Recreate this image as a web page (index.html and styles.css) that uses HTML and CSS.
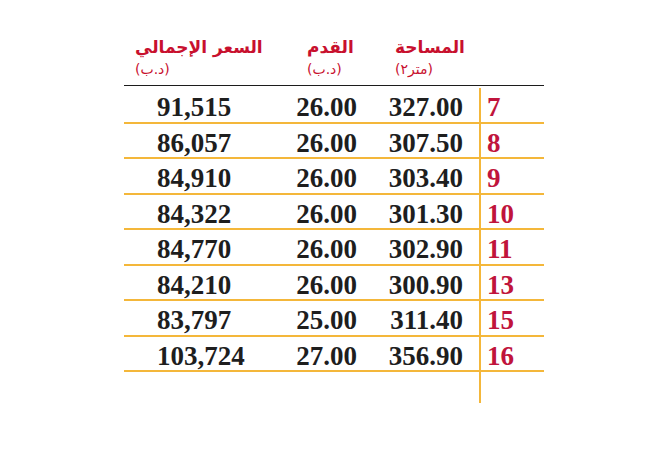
FILE: index.html
```html
<!DOCTYPE html>
<html lang="ar">
<head>
<meta charset="utf-8">
<title>Table</title>
<link rel="stylesheet" href="styles.css">
</head>
<body>
<div class="table">
  <div class="head">
    <div class="hc h1"><span class="ht" dir="rtl">السعر الإجمالي</span><span class="hs" dir="rtl">(د.ب)</span></div>
    <div class="hc h2"><span class="ht" dir="rtl">القدم</span><span class="hs" dir="rtl">(د.ب)</span></div>
    <div class="hc h3"><span class="ht" dir="rtl">المساحة</span><span class="hs" dir="rtl">(متر٢)</span></div>
    <div class="hc h4"></div>
  </div>
  <div class="body">
    <div class="row"><div class="c c1">91,515</div><div class="c c2">26.00</div><div class="c c3">327.00</div><div class="c c4">7</div></div>
    <div class="row"><div class="c c1">86,057</div><div class="c c2">26.00</div><div class="c c3">307.50</div><div class="c c4">8</div></div>
    <div class="row"><div class="c c1">84,910</div><div class="c c2">26.00</div><div class="c c3">303.40</div><div class="c c4">9</div></div>
    <div class="row"><div class="c c1">84,322</div><div class="c c2">26.00</div><div class="c c3">301.30</div><div class="c c4">10</div></div>
    <div class="row"><div class="c c1">84,770</div><div class="c c2">26.00</div><div class="c c3">302.90</div><div class="c c4">11</div></div>
    <div class="row"><div class="c c1">84,210</div><div class="c c2">26.00</div><div class="c c3">300.90</div><div class="c c4">13</div></div>
    <div class="row"><div class="c c1">83,797</div><div class="c c2">25.00</div><div class="c c3">311.40</div><div class="c c4">15</div></div>
    <div class="row"><div class="c c1">103,724</div><div class="c c2">27.00</div><div class="c c3">356.90</div><div class="c c4">16</div></div>
    <div class="tail"><div></div><div></div><div></div><div class="c4"></div></div>
  </div>
</div>
</body>
</html>
```
FILE: styles.css
```css
html, body {
  margin: 0;
  padding: 0;
  background: #ffffff;
}
body {
  width: 668px;
  height: 452px;
  overflow: hidden;
}
.table {
  margin-left: 124px;
  width: 420px;
}
.head, .row, .tail {
  display: grid;
  grid-template-columns: 166px 90px 99px 65px;
}
.head {
  height: 86px;
  box-sizing: border-box;
  border-bottom: 1.5px solid #1c1c1c;
  padding-top: 36px;
}
.hc {
  display: flex;
  flex-direction: column;
  align-items: flex-start;
  font-family: "DejaVu Sans", sans-serif;
  color: #c8102e;
}
.h1 { padding-left: 11px; }
.h2 { padding-left: 17px; }
.h3 { padding-left: 15px; }
.ht {
  font-size: 17px;
  font-weight: bold;
  line-height: 22px;
}
.hs {
  font-size: 14px;
  line-height: 22px;
}
.body {
  padding-top: 2px;
}
.row {
  height: 35.5px;
  box-sizing: border-box;
  border-bottom: 2px solid #f4b73a;
}
.c {
  font-family: "Liberation Serif", "Times New Roman", serif;
  font-weight: bold;
  font-size: 27px;
  line-height: 27.5px;
  padding-top: 6px;
  color: #1e1e1e;
}
.c1 { padding-left: 33px; }
.c2 { text-align: right; padding-right: 23px; }
.c3 { text-align: right; padding-right: 16px; }
.c4 {
  border-left: 2px solid #f4b73a;
  padding-left: 6px;
  color: #c0143c;
}
.tail {
  height: 31px;
}
.tail .c4 {
  padding: 0;
}
```
